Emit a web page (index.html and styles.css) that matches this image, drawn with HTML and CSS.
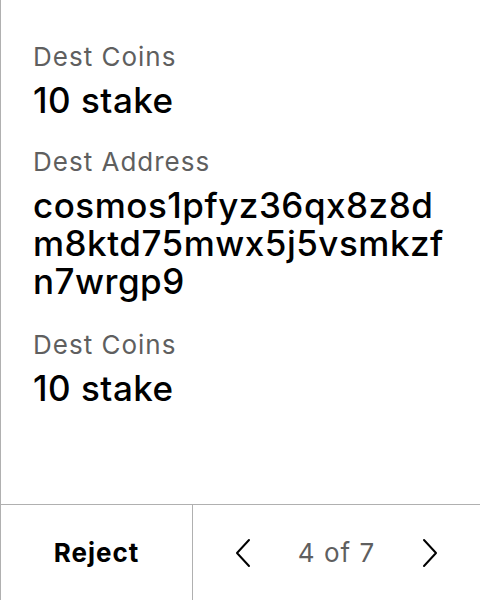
FILE: index.html
```html
<!DOCTYPE html>
<html>
<head>
<meta charset="utf-8">
<link rel="stylesheet" href="styles.css">
</head>
<body>
<div class="screen">
  <div class="content">
    <div class="field">
      <div class="label">Dest Coins</div>
      <div class="value">10 stake</div>
    </div>
    <div class="field">
      <div class="label">Dest Address</div>
      <div class="value addr">cosmos1pfyz36qx8z8dm8ktd75mwx5j5vsmkzfn7wrgp9</div>
    </div>
    <div class="field">
      <div class="label">Dest Coins</div>
      <div class="value">10 stake</div>
    </div>
  </div>
  <div class="footer">
    <div class="reject">Reject</div>
    <div class="pager">
      <svg class="chev" width="20" height="30" viewBox="0 0 20 30"><path d="M16 2 L4 15 L16 28" fill="none" stroke="#000" stroke-width="2" stroke-linecap="round" stroke-linejoin="round"/></svg>
      <span class="count">4 of 7</span>
      <svg class="chev" width="20" height="30" viewBox="0 0 20 30"><path d="M4 2 L16 15 L4 28" fill="none" stroke="#000" stroke-width="2" stroke-linecap="round" stroke-linejoin="round"/></svg>
    </div>
  </div>
</div>
</body>
</html>
```
FILE: styles.css
```css
html, body {
  margin: 0;
  padding: 0;
  background: #fff;
}
body {
  font-family: Inter, "Noto Sans", sans-serif;
  color: #000;
}
.screen {
  width: 480px;
  height: 600px;
  box-sizing: border-box;
  border-left: 1px solid #b0b0b0;
  display: flex;
  flex-direction: column;
}
.content {
  flex: 1;
  padding: 41px 32px 0 32px;
  display: flex;
  flex-direction: column;
  gap: 27px;
}
.label {
  font-size: 26px;
  line-height: 32px;
  letter-spacing: 1px;
  color: #5f5f5f;
}
.value {
  font-size: 35px;
  line-height: 38px;
  letter-spacing: 0.5px;
  font-weight: 500;
  margin-top: 8px;
}
.addr {
  word-break: break-all;
  margin-bottom: 2px;
}
.footer {
  height: 95px;
  border-top: 1px solid #b0b0b0;
  display: flex;
}
.reject {
  width: 191px;
  border-right: 1px solid #b0b0b0;
  display: flex;
  align-items: center;
  justify-content: center;
  font-size: 26px;
  letter-spacing: 1px;
  font-weight: 700;
}
.pager {
  flex: 1;
  display: flex;
  align-items: center;
  justify-content: space-between;
  padding: 0 40px 0 40px;
}
.count {
  font-size: 26px;
  letter-spacing: 1px;
  color: #5f5f5f;
}
```
